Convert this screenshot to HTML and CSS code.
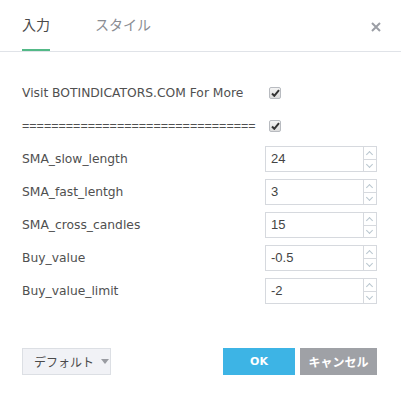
FILE: index.html
```html
<!DOCTYPE html>
<html>
<head>
<meta charset="utf-8">
<link rel="stylesheet" href="styles.css">
</head>
<body>
<div class="dialog">
  <div class="header">
    <div class="tabs">
      <div class="tab active">入力</div>
      <div class="tab">スタイル</div>
    </div>
    <div class="close">
      <svg width="10" height="10" viewBox="0 0 10 10"><path d="M1 1 L9 9 M9 1 L1 9" stroke="#9b9ea5" stroke-width="2" fill="none"/></svg>
    </div>
  </div>
  <div class="content">
    <div class="row">
      <div class="label">Visit BOTINDICATORS.COM For More</div>
      <div class="value"><span class="check"><svg width="9" height="8" viewBox="0 0 9 8"><path d="M1 4.5 L3.3 6.8 L8 1.2" stroke="#333" stroke-width="2" fill="none"/></svg></span></div>
    </div>
    <div class="row">
      <div class="label eq">================================</div>
      <div class="value"><span class="check"><svg width="9" height="8" viewBox="0 0 9 8"><path d="M1 4.5 L3.3 6.8 L8 1.2" stroke="#333" stroke-width="2" fill="none"/></svg></span></div>
    </div>
    <div class="row">
      <div class="label">SMA_slow_length</div>
      <div class="value"><div class="input"><span class="num">24</span><span class="spin"><span class="up"></span><span class="down"></span></span></div></div>
    </div>
    <div class="row">
      <div class="label">SMA_fast_lentgh</div>
      <div class="value"><div class="input"><span class="num">3</span><span class="spin"><span class="up"></span><span class="down"></span></span></div></div>
    </div>
    <div class="row">
      <div class="label">SMA_cross_candles</div>
      <div class="value"><div class="input"><span class="num">15</span><span class="spin"><span class="up"></span><span class="down"></span></span></div></div>
    </div>
    <div class="row">
      <div class="label">Buy_value</div>
      <div class="value"><div class="input"><span class="num">-0.5</span><span class="spin"><span class="up"></span><span class="down"></span></span></div></div>
    </div>
    <div class="row">
      <div class="label">Buy_value_limit</div>
      <div class="value"><div class="input"><span class="num">-2</span><span class="spin"><span class="up"></span><span class="down"></span></span></div></div>
    </div>
  </div>
  <div class="footer">
    <div class="default">デフォルト<span class="tri"></span></div>
    <div class="buttons">
      <div class="btn ok">OK</div>
      <div class="btn cancel">キャンセル</div>
    </div>
  </div>
</div>
</body>
</html>
```
FILE: styles.css
```css
html, body {
  margin: 0;
  padding: 0;
  background: #fff;
}
.dialog {
  width: 401px;
  height: 401px;
  font-family: "DejaVu Sans", "Noto Sans CJK JP", sans-serif;
  color: #4a4a4a;
}
.header {
  height: 51px;
  border-bottom: 1px solid #e0e3e8;
  display: flex;
  justify-content: space-between;
  padding: 0 20px 0 22px;
  box-sizing: content-box;
}
.tabs {
  display: flex;
  gap: 45px;
}
.tab {
  font-family: "Noto Sans CJK JP", sans-serif;
  font-size: 14px;
  color: #8a8d93;
  padding-top: 14px;
  height: 35px;
  line-height: 21px;
  box-sizing: content-box;
  border-bottom: 2px solid transparent;
}
.tab.active {
  color: #4a4a4a;
  border-bottom-color: #53b987;
}
.close {
  padding-top: 17px;
}
.content {
  padding: 28px 24px 0 22px;
  display: flex;
  flex-direction: column;
  gap: 7px;
}
.row {
  display: grid;
  grid-template-columns: 243px 1fr;
  height: 26px;
  align-items: center;
}
.label {
  font-size: 12.3px;
  white-space: nowrap;
  color: #505050;
}
.label.eq {
  font-family: "Liberation Sans", sans-serif;
  font-size: 12.5px;
}
.value {
  display: flex;
  align-items: center;
}
.check {
  margin-left: 4px;
  width: 10px;
  height: 10px;
  border: 1px solid #b8bbc0;
  border-radius: 2px;
  background: linear-gradient(#f4f4f4, #dcdcdc);
  display: flex;
  align-items: center;
  justify-content: center;
}
.input {
  width: 112px;
  height: 26px;
  box-sizing: border-box;
  border: 1px solid #d6d9de;
  display: flex;
}
.num {
  flex: 1;
  font-family: "Liberation Sans", sans-serif;
  font-size: 13px;
  color: #444;
  padding-left: 5px;
  line-height: 24px;
}
.spin {
  width: 12px;
  border-left: 1px solid #d6d9de;
  display: flex;
  flex-direction: column;
}
.spin span {
  flex: 1;
  position: relative;
}
.spin .up {
  border-bottom: 1px solid #d6d9de;
}
.spin span::after {
  content: "";
  position: absolute;
  left: 3px;
  width: 4px;
  height: 4px;
  border-left: 1px solid #b9c6cf;
  border-top: 1px solid #b9c6cf;
}
.spin .up::after {
  top: 5px;
  transform: rotate(45deg);
}
.spin .down::after {
  top: 2px;
  transform: rotate(225deg);
}
.footer {
  display: flex;
  justify-content: space-between;
  padding: 44px 24px 0 22px;
}
.default {
  width: 89px;
  height: 27px;
  box-sizing: border-box;
  border: 1px solid #dcdfe4;
  background: #f1f2f6;
  font-family: "Noto Sans CJK JP", sans-serif;
  font-size: 12px;
  color: #4a4a4a;
  display: flex;
  align-items: center;
  padding-left: 11px;
  gap: 7px;
}
.tri {
  width: 0;
  height: 0;
  border-left: 4px solid transparent;
  border-right: 4px solid transparent;
  border-top: 5px solid #9a9ca2;
}
.buttons {
  display: flex;
  gap: 5px;
}
.btn {
  height: 27px;
  display: flex;
  align-items: center;
  justify-content: center;
  color: #fff;
  font-weight: bold;
  font-family: "Noto Sans CJK JP", sans-serif;
}
.ok {
  width: 72px;
  background: #3db4e5;
  font-size: 11px;
  font-family: "DejaVu Sans", sans-serif;
}
.cancel {
  width: 77px;
  background: #9fa1a6;
  font-size: 12px;
}
```
